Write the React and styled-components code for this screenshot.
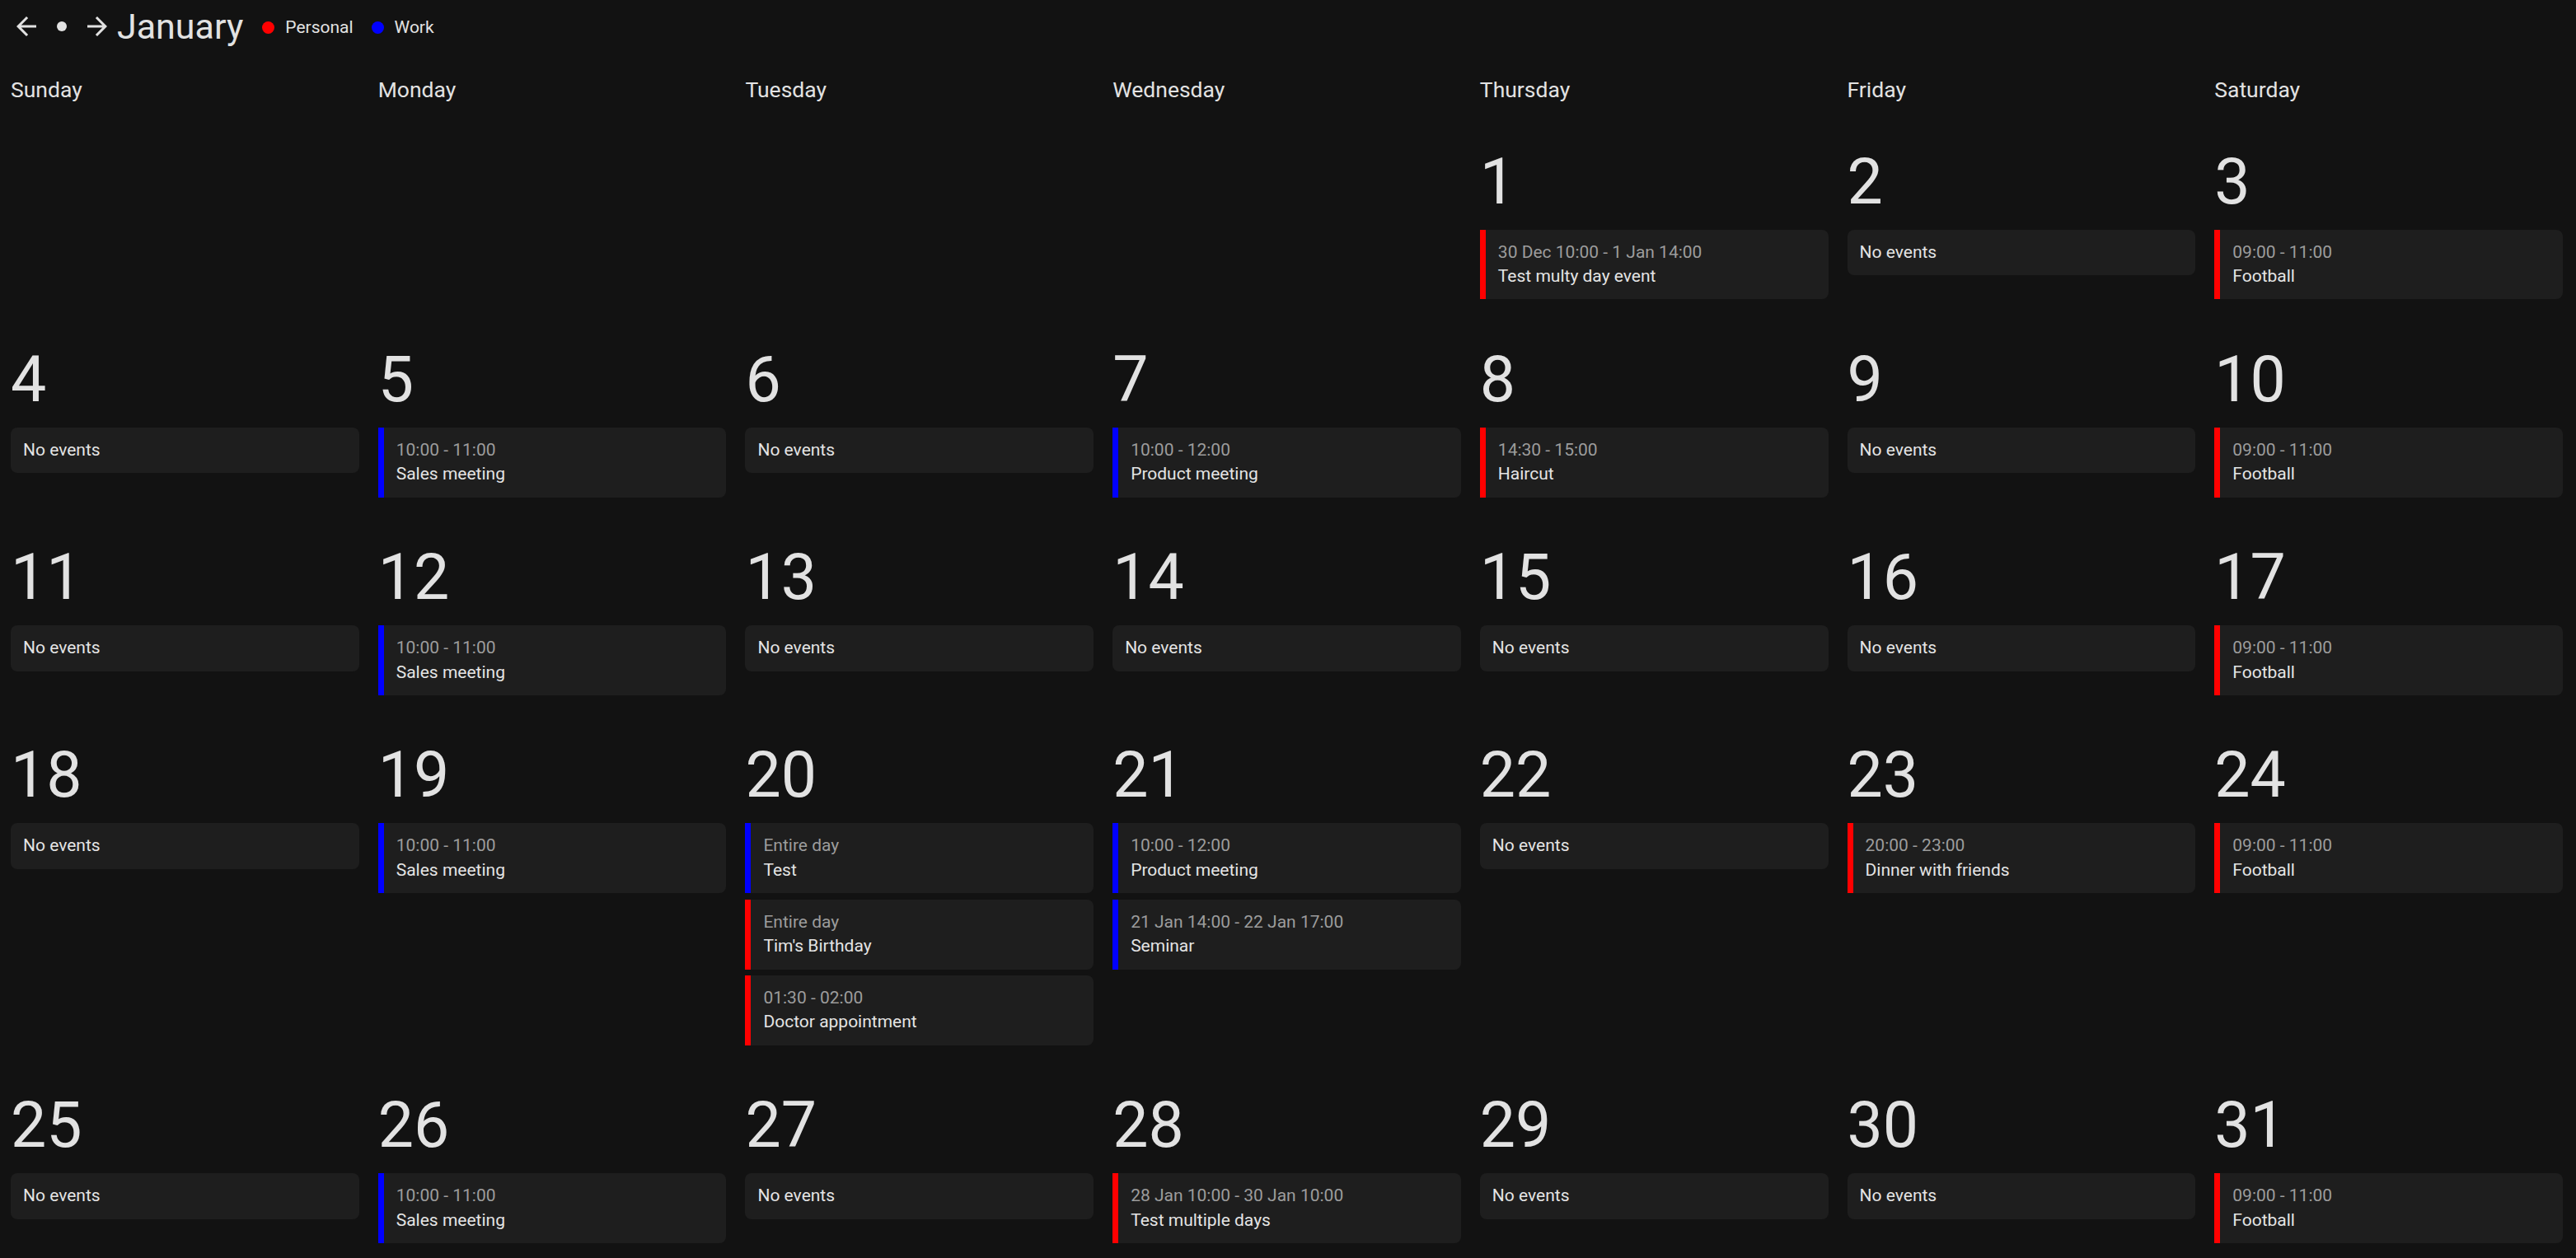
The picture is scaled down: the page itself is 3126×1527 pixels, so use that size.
import React from "react";
import styled, { createGlobalStyle } from "styled-components";

const RED = "#ff0000";
const BLUE = "#0000ff";

const GlobalStyle = createGlobalStyle`
  html, body {
    margin: 0;
    padding: 0;
    background: #121212;
    color: #e2e2e2;
    font-family: Roboto, "Liberation Sans", sans-serif;
  }
`;

const Page = styled.div`
  min-height: 100vh;
  background: #121212;
`;

const Toolbar = styled.div`
  display: flex;
  align-items: center;
  height: 64px;
  padding-left: 10px;
`;

const NavButton = styled.button`
  width: 43px;
  height: 43px;
  display: flex;
  align-items: center;
  justify-content: center;
  padding: 0;
  border: none;
  background: none;
  color: #e2e2e2;
  cursor: pointer;
`;

const TodayDot = styled.span`
  width: 12px;
  height: 12px;
  border-radius: 50%;
  background: #e2e2e2;
`;

const MonthTitle = styled.h1`
  margin: 0 0 0 3px;
  font-size: 43px;
  font-weight: 400;
  line-height: 1;
`;

const Legend = styled.div`
  display: flex;
  align-items: center;
  gap: 22px;
  margin-left: 23px;
  padding-top: 2px;
`;

const LegendItem = styled.div`
  display: flex;
  align-items: center;
  gap: 13px;
  font-size: 21px;
`;

const LegendDot = styled.span`
  width: 15px;
  height: 15px;
  border-radius: 50%;
  background: ${(p) => p.color};
`;

const Grid = styled.div`
  display: grid;
  grid-template-columns: repeat(7, 1fr);
  column-gap: 23px;
  row-gap: 52.5px;
  padding: 31px 16px 0 13px;
`;

const WeekdayName = styled.div`
  font-size: 26.5px;
  line-height: 28px;
`;

const DayCell = styled.div`
  display: flex;
  flex-direction: column;
  min-width: 0;
`;

const DayNumber = styled.div`
  font-size: 77px;
  line-height: 90px;
  font-weight: 400;
  margin-bottom: 13px;
`;

const EventList = styled.div`
  display: flex;
  flex-direction: column;
  gap: 7.5px;
`;

const EventCard = styled.div`
  background: #1e1e1e;
  padding: 13px 15px;
  font-size: 21px;
  line-height: 29.4px;
  border-left: ${(p) => (p.$color ? `7px solid ${p.$color}` : "none")};
  border-radius: ${(p) => (p.$color ? "0 8px 8px 0" : "8px")};
`;

const EventTime = styled.div`
  color: #9c9c9c;
`;

const EventTitle = styled.div`
  color: #e4e4e4;
`;

const ArrowIcon = ({ dir }) => (
  <svg width="36" height="36" viewBox="0 0 24 24" fill="currentColor">
    {dir === "left" ? (
      <path d="M20 11H7.83l5.59-5.59L12 4l-8 8 8 8 1.41-1.41L7.83 13H20v-2z" />
    ) : (
      <path d="M12 4l-1.41 1.41L16.17 11H4v2h12.17l-5.58 5.59L12 20l8-8z" />
    )}
  </svg>
);

const weekdays = [
  "Sunday",
  "Monday",
  "Tuesday",
  "Wednesday",
  "Thursday",
  "Friday",
  "Saturday",
];

const football = [{ color: RED, time: "09:00 - 11:00", title: "Football" }];
const sales = [{ color: BLUE, time: "10:00 - 11:00", title: "Sales meeting" }];
const product = { color: BLUE, time: "10:00 - 12:00", title: "Product meeting" };

const events = {
  1: [{ color: RED, time: "30 Dec 10:00 - 1 Jan 14:00", title: "Test multy day event" }],
  3: football,
  5: sales,
  7: [product],
  8: [{ color: RED, time: "14:30 - 15:00", title: "Haircut" }],
  10: football,
  12: sales,
  17: football,
  19: sales,
  20: [
    { color: BLUE, time: "Entire day", title: "Test" },
    { color: RED, time: "Entire day", title: "Tim's Birthday" },
    { color: RED, time: "01:30 - 02:00", title: "Doctor appointment" },
  ],
  21: [product, { color: BLUE, time: "21 Jan 14:00 - 22 Jan 17:00", title: "Seminar" }],
  23: [{ color: RED, time: "20:00 - 23:00", title: "Dinner with friends" }],
  24: football,
  26: sales,
  28: [{ color: RED, time: "28 Jan 10:00 - 30 Jan 10:00", title: "Test multiple days" }],
  31: football,
};

// January starts on a Thursday
const cells = [null, null, null, null];
for (let d = 1; d <= 31; d++) cells.push(d);

const Day = ({ day }) => {
  if (!day) return <DayCell />;
  const list = events[day] || [];
  return (
    <DayCell>
      <DayNumber>{day}</DayNumber>
      <EventList>
        {list.length === 0 ? (
          <EventCard>
            <EventTitle>No events</EventTitle>
          </EventCard>
        ) : (
          list.map((e, i) => (
            <EventCard key={i} $color={e.color}>
              <EventTime>{e.time}</EventTime>
              <EventTitle>{e.title}</EventTitle>
            </EventCard>
          ))
        )}
      </EventList>
    </DayCell>
  );
};

export default function App() {
  return (
    <Page>
      <GlobalStyle />
      <Toolbar>
        <NavButton aria-label="previous month">
          <ArrowIcon dir="left" />
        </NavButton>
        <NavButton aria-label="today">
          <TodayDot />
        </NavButton>
        <NavButton aria-label="next month">
          <ArrowIcon dir="right" />
        </NavButton>
        <MonthTitle>January</MonthTitle>
        <Legend>
          <LegendItem>
            <LegendDot color={RED} />
            Personal
          </LegendItem>
          <LegendItem>
            <LegendDot color={BLUE} />
            Work
          </LegendItem>
        </Legend>
      </Toolbar>
      <Grid>
        {weekdays.map((w) => (
          <WeekdayName key={w}>{w}</WeekdayName>
        ))}
        {cells.map((d, i) => (
          <Day key={i} day={d} />
        ))}
      </Grid>
    </Page>
  );
}
